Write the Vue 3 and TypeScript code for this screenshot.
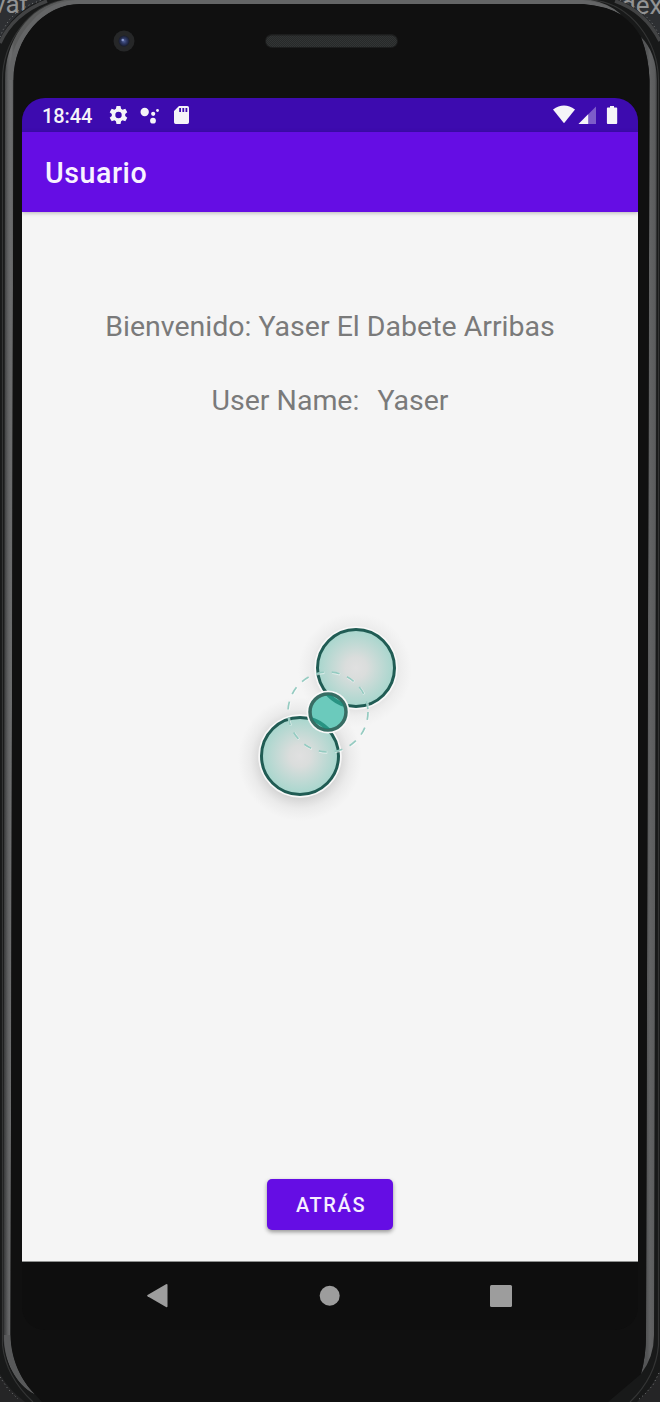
<script setup lang="ts">
import { ref } from 'vue'

const fullName = ref('Yaser El Dabete Arribas')
const userName = ref('Yaser')
const circles = [
  { x: 356, y: 668 },
  { x: 300, y: 756 },
]
</script>

<template>
  <div class="desk">
    <svg class="frame" width="660" height="1402" viewBox="0 0 660 1402" aria-hidden="true">
      <defs>
        <linearGradient id="rimLeft" x1="4" x2="14" y1="0" y2="0" gradientUnits="userSpaceOnUse">
          <stop offset="0" stop-color="#393a3b" />
          <stop offset=".4" stop-color="#606162" />
          <stop offset=".7" stop-color="#6d6e6f" />
          <stop offset="1" stop-color="#5a5b5b" />
        </linearGradient>
        <linearGradient id="rimRight" x1="647" x2="657" y1="0" y2="0" gradientUnits="userSpaceOnUse">
          <stop offset="0" stop-color="#545556" />
          <stop offset=".3" stop-color="#626364" />
          <stop offset=".8" stop-color="#5b5c5d" />
          <stop offset="1" stop-color="#38393a" />
        </linearGradient>
        <pattern id="mesh" width="2" height="2" patternUnits="userSpaceOnUse">
          <rect width="2" height="2" fill="#272929" />
          <rect width="1" height="1" fill="#323535" />
          <rect x="1" y="1" width="1" height="1" fill="#323535" />
        </pattern>
        <radialGradient id="lens">
          <stop offset="0" stop-color="#53629a" />
          <stop offset=".45" stop-color="#303b68" />
          <stop offset="1" stop-color="#171b2b" />
        </radialGradient>
      </defs>
      <rect width="660" height="1402" fill="#2d2f32" />
      <rect y="1300" width="660" height="102" fill="#252526" />
      <text class="behind" x="-7" y="13">vat</text>
      <text class="behind" x="621" y="13.500">dex</text>
      <!-- body -->
      <path d="M0 39C8 22 22 7 43 0H618C638 7 651 21 660 37V1371Q651 1389 637 1402H25Q8 1389 0 1374Z" fill="#181919" />
      <path d="M0 43C8 25 24 9 47 1M615 1C636 8 651 23 660 41" fill="none" stroke="#424344" stroke-width="3.500" />
      <path d="M2.500 1345V80C2.500 42 30 4 66 0M592 0C632 4 658 42 658.500 80V1345Q656 1377 630 1402M2.500 1345Q6 1377 33 1402" fill="none" stroke="#343535" stroke-width="1.200" />
      <!-- metal rim -->
      <path d="M5 80C5 38 32 0 75 -1H583Q607 1 621 14.500Q607 6 583 4H80C44 4 13.500 38 13.500 80L10.500 1335C11 1361 22 1381 34.500 1394C16 1385 3 1359 3.500 1335Z" fill="url(#rimLeft)" />
      <path d="M33 20C42 9 58 1 75 0H583Q607 2 621 14.500Q607 6 583 4H80C61 4 49 11 38 21C24 34 14 55 13.500 80H8C9 54 19 34 33 20Z" fill="#646566" />
      <path d="M641 37Q656 52 657 80L654 1335Q654 1357 641 1374Q646 1356 646 1335L649.500 80Q649 59 641 37Z" fill="url(#rimRight)" />
      <path d="M4 1335H10.500C11 1361 22 1381 34.500 1394C16 1385 3.500 1359 4 1335Z" fill="#58595a" />
      <!-- glass -->
      <path d="M80 4H583Q607 6 621 15Q633 23 641 37Q649 58 649.500 80L646 1335Q646 1356 641 1374L608 1402H42L34 1393C22 1381 11 1361 10.500 1335L13.500 80C13.500 38 44 4 80 4Z" fill="#101010" />
      <path d="M0 37L3 30 9 20 18 11 31 4 42 0M620 0L631 4 643 13 652 23 659 34M0 1377L8 1389 18 1399M659 1373L653 1385 645 1394 638 1400" fill="none" stroke="#77797a" stroke-width="1" stroke-dasharray="1 3" />
      <rect x="265" y="34" width="133" height="14" rx="7" fill="#1c1d1d" />
      <rect x="266" y="35.500" width="131" height="11.500" rx="5.700" fill="url(#mesh)" />
      <circle cx="124" cy="41" r="10.500" fill="#262728" />
      <circle cx="124" cy="41" r="5.500" fill="url(#lens)" />
      <circle cx="122.800" cy="40" r="1.300" fill="#8796c9" />
    </svg>

    <main class="screen">
      <header class="status">
        <span class="time">18:44</span>
        <svg class="status-left" width="80" height="20" viewBox="0 0 80 20" fill="#f5f4f8">
          <path fill-rule="evenodd" d="M7.500 1h4l.6 2.800 1.500.9 2.700-.9 2 3.400-2.100 1.900v1.800l2.100 1.900-2 3.400-2.700-.9-1.500.9-.6 2.700h-4l-.6-2.700-1.500-.9-2.700.9-2-3.400 2.100-1.900V9.100L.7 7.200l2-3.400 2.700.9 1.500-.9zM9.500 6.800a3.200 3.200 0 1 0 0 6.400 3.200 3.200 0 0 0 0-6.400z" />
          <circle cx="35.700" cy="7" r="4.200" /><circle cx="44.200" cy="8.800" r="2.100" /><circle cx="44" cy="15.700" r="2.900" /><circle cx="48.500" cy="5.500" r="1.400" />
          <path fill-rule="evenodd" d="M70 1h8.300q1.700 0 1.700 1.700v14.600q0 1.700-1.700 1.700H66.700Q65 19 65 17.300V6zM70.200 3v4h1.800V3zm3.200 0v4h1.800V3zm3.100 0v4h1.800V3z" />
        </svg>
        <svg class="status-right" width="65" height="20" viewBox="0 0 65 20" fill="#f5f4f8">
          <path d="M0 4.500Q11-3.500 22 4.500L11 18.300z" />
          <path d="M25.500 19L43 1.500V19z" opacity=".35" />
          <path d="M25.500 19l9.700-9.700V19z" />
          <path d="M57 1h4v1.500h2.300q.9 0 .9.900V18q0 1-.9 1h-8.500q-.9 0-.9-1V3.400q0-.9.900-.9H57z" />
        </svg>
      </header>
      <div class="app-bar">Usuario</div>
      <section class="content">
        <p class="welcome">Bienvenido: {{ fullName }}</p>
        <p class="user"><span>User Name:</span><span>{{ userName }}</span></p>
        <div class="space"></div>
        <button class="back">ATRÁS</button>
      </section>
      <nav class="nav">
        <svg width="616" height="68" viewBox="22 1262 616 68" fill="#9d9d9d">
          <path d="M147.500 1295q-.8.700 0 1.300l18.500 10.800q1.500.7 1.500-.8v-21.400q0-1.500-1.500-.7z" />
          <circle cx="329.700" cy="1295.700" r="10" />
          <rect x="490" y="1285" width="22" height="22" rx="1.500" />
        </svg>
      </nav>
    </main>

    <svg class="touch" width="200" height="230" viewBox="230 600 200 230" aria-hidden="true">
      <defs>
        <radialGradient id="touchFill">
          <stop offset="0" stop-color="#e0e0e0" />
          <stop offset=".28" stop-color="#dadddc" />
          <stop offset="1" stop-color="#a7d6cd" />
        </radialGradient>
        <radialGradient id="glow">
          <stop offset=".55" stop-color="#777" stop-opacity=".36" />
          <stop offset=".8" stop-color="#999" stop-opacity=".11" />
          <stop offset="1" stop-color="#aaa" stop-opacity="0" />
        </radialGradient>
        <clipPath id="middle"><circle cx="328" cy="712" r="17" /></clipPath>
      </defs>
      <circle cx="355" cy="670" r="57" fill="url(#glow)" opacity=".75" />
      <circle cx="300" cy="759" r="62" fill="url(#glow)" />
      <g v-for="circle in circles" :key="circle.x">
        <circle :cx="circle.x" :cy="circle.y" r="41.800" fill="#f8f8f8" />
        <circle :cx="circle.x" :cy="circle.y" r="38.500" fill="url(#touchFill)" stroke="#205c54" stroke-width="3" />
      </g>
      <circle cx="328.500" cy="712.500" r="40" fill="none" stroke="#fff" stroke-opacity=".55" stroke-width="2.500" stroke-dasharray="8 8" />
      <circle cx="328" cy="712" r="40" fill="none" stroke="#95cbc1" stroke-width="1.700" stroke-dasharray="8 8" />
      <circle cx="328" cy="712" r="21.500" fill="#f8f8f8" />
      <circle cx="328" cy="712" r="18" fill="#6bcabc" stroke="#386d64" stroke-width="3.500" />
      <g clip-path="url(#middle)" fill="none" stroke="#188473" stroke-width="4" stroke-opacity=".8">
        <circle cx="356" cy="668" r="38.500" />
        <circle cx="300" cy="756" r="38.500" />
      </g>
    </svg>
  </div>
</template>

<style>
body { margin: 0; background: #101010; }
</style>

<style scoped>
.desk { position: relative; width: 660px; height: 1402px; overflow: hidden; font-family: Roboto, sans-serif; }
.frame { position: absolute; inset: 0; }
.behind { font: 26px Roboto, sans-serif; fill: #929394; }
.screen { position: relative; display: flex; flex-direction: column; width: 616px; height: 1232px; margin: 98px 22px 0; overflow: hidden; border-radius: 23px; background: #0e0e0e; }
.status { display: flex; flex: 0 0 34px; align-items: center; padding: 0 20px; box-sizing: border-box; background: #3d0baf; color: #f5f4f8; }
.time { width: 67px; font-size: 20px; line-height: 34px; font-weight: 500; letter-spacing: -.1px; transform: translateY(1px); }
.status-right { margin-left: auto; }
.app-bar { position: relative; z-index: 1; flex: 0 0 80px; height: 80px; min-height: 0; padding-left: 23px; box-sizing: border-box; background: #650de4; color: #f8f2ff; font-size: 28.6px; line-height: 83px; font-weight: 500; letter-spacing: .55px; box-shadow: 0 1px 4px #0004; }
.content { display: flex; flex: 0 0 1050px; flex-direction: column; align-items: center; box-sizing: border-box; padding: 98px 0 31px; border-bottom: 1px solid #8f9190; background: #f5f5f5; color: #7a7a7a; }
p { margin: 0; font-size: 28.5px; line-height: 34px; white-space: nowrap; }
.app-bar { max-height: 80px; }
.user { display: flex; gap: 18px; margin-top: 40px; }
.space { flex: 1; }
.back { width: 126px; height: 51px; padding: 1px 0 0 2px; border: 0; border-radius: 5px; background: #650de4; color: #f5eeff; font: 500 20px Roboto, sans-serif; letter-spacing: 1.6px; box-shadow: 0 2px 4px #0006; }
.nav { height: 68px; }
.nav svg { display: block; }
.touch { position: absolute; left: 230px; top: 600px; pointer-events: none; }
</style>
